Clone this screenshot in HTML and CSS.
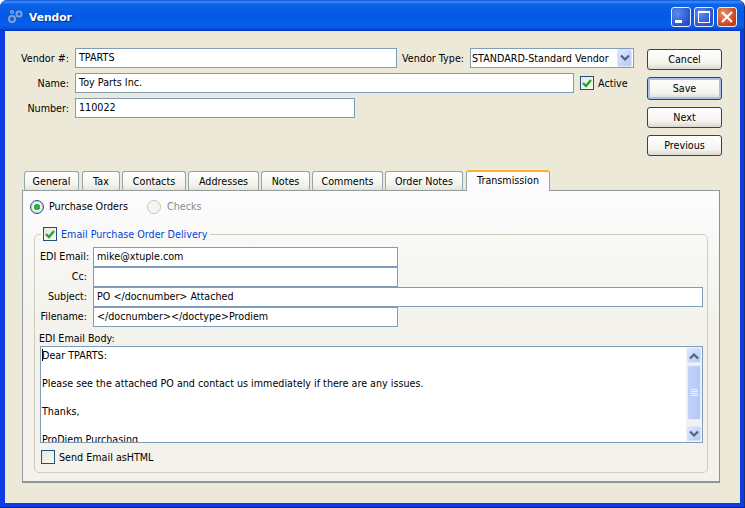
FILE: index.html
```html
<!DOCTYPE html>
<html lang="en">
<head>
<meta charset="utf-8">
<title>Vendor</title>
<link rel="stylesheet" href="styles.css">
</head>
<body>
<div class="window">
  <header class="titlebar">
    <svg class="app-icon" width="16" height="16" viewBox="0 0 16 16" fill="none" stroke="#7fa3d6" stroke-width="2"><circle cx="5" cy="10" r="3"/><circle cx="12" cy="5" r="2.6"/><circle cx="5" cy="3" r="1.4" stroke-width="1.4"/></svg>
    <span class="title">Vendor</span>
    <div class="caption-buttons">
      <span class="cap cap-blue"><svg width="20" height="20" viewBox="0 0 20 20"><rect x="4" y="13" width="7" height="3" fill="#fff"/></svg></span>
      <span class="cap cap-blue"><svg width="20" height="20" viewBox="0 0 20 20" fill="none" stroke="#fff"><rect x="4.5" y="4.5" width="11" height="11"/><path d="M4 5.5h12"/></svg></span>
      <span class="cap cap-red"><svg width="20" height="20" viewBox="0 0 20 20" stroke="#fff" stroke-width="2.2"><path d="M5 5l10 10M15 5L5 15"/></svg></span>
    </div>
  </header>
  <main class="client">
    <section class="top">
      <div class="top-form">
        <div class="row row-vendor">
          <label class="lbl lbl-top">Vendor #:</label>
          <div class="input w-vendor">TPARTS</div>
          <label class="lbl-type">Vendor Type:</label>
          <div class="select">
            <span>STANDARD-Standard Vendor</span>
            <span class="sel-btn"><svg width="12" height="8" viewBox="0 0 12 8" fill="none" stroke="#4d6185" stroke-width="2.2"><path d="M2 1.5l4 4 4-4"/></svg></span>
          </div>
        </div>
        <div class="row row-name">
          <label class="lbl lbl-top">Name:</label>
          <div class="input w-name">Toy Parts Inc.</div>
          <span class="check check-on check-active"><svg width="12" height="12" viewBox="0 0 12 12" fill="none" stroke="#22a52e" stroke-width="2.4"><path d="M2 6l3 3 5-6"/></svg></span>
          <span class="check-label">Active</span>
        </div>
        <div class="row row-number">
          <label class="lbl lbl-top">Number:</label>
          <div class="input w-number">110022</div>
        </div>
      </div>
      <div class="buttons">
        <button class="btn btn-cancel">Cancel</button>
        <button class="btn btn-save">Save</button>
        <button class="btn btn-next">Next</button>
        <button class="btn">Previous</button>
      </div>
    </section>

    <nav class="tabs">
      <span class="tab t-general">General</span>
      <span class="tab t-tax">Tax</span>
      <span class="tab t-contacts">Contacts</span>
      <span class="tab t-addresses">Addresses</span>
      <span class="tab t-notes">Notes</span>
      <span class="tab t-comments">Comments</span>
      <span class="tab t-order">Order Notes</span>
      <span class="tab tab-active">Transmission</span>
    </nav>

    <section class="panel">
      <div class="radios">
        <span class="radio radio-on"></span><span class="radio-label rl-po">Purchase Orders</span>
        <span class="radio radio-off"></span><span class="radio-label disabled">Checks</span>
      </div>
      <fieldset class="group">
        <legend class="legend">
          <span class="check check-on"><svg width="12" height="12" viewBox="0 0 12 12" fill="none" stroke="#22a52e" stroke-width="2.4"><path d="M2 6l3 3 5-6"/></svg></span>
          <span class="legend-text">Email Purchase Order Delivery</span>
        </legend>
        <div class="mail-form">
          <label class="lbl-mail">EDI Email:</label><div class="input mail w-mail">mike@xtuple.com</div>
          <label class="lbl-mail">Cc:</label><div class="input mail w-mail"></div>
          <label class="lbl-mail">Subject:</label><div class="input mail w-subject">PO &lt;/docnumber&gt; Attached</div>
          <label class="lbl-mail">Filename:</label><div class="input mail w-mail">&lt;/docnumber&gt;&lt;/doctype&gt;Prodiem</div>
        </div>
        <div class="body-label">EDI Email Body:</div>
        <div class="body-box">
          <div class="body-text">
            <p><span class="caret"></span>Dear TPARTS:</p>
            <p>&nbsp;</p>
            <p>Please see the attached PO and contact us immediately if there are any issues.</p>
            <p>&nbsp;</p>
            <p>Thanks,</p>
            <p>&nbsp;</p>
            <p>ProDiem Purchasing</p>
          </div>
          <div class="scrollbar">
            <span class="sb-btn"><svg width="12" height="8" viewBox="0 0 12 8" fill="none" stroke="#4d6185" stroke-width="2.2"><path d="M2 6.5l4-4 4 4"/></svg></span>
            <span class="sb-thumb"><svg width="7" height="8" viewBox="0 0 7 8" stroke="#eef3ff"><path d="M0 .5h7M0 2.5h7M0 4.5h7M0 6.5h7"/></svg></span>
            <span class="sb-btn sb-down"><svg width="12" height="8" viewBox="0 0 12 8" fill="none" stroke="#4d6185" stroke-width="2.2"><path d="M2 1.5l4 4 4-4"/></svg></span>
          </div>
        </div>
        <div class="send-row">
          <span class="check check-off"></span>
          <span class="check-label">Send Email asHTML</span>
        </div>
      </fieldset>
    </section>
  </main>
</div>
</body>
</html>
```

FILE: styles.css
```css
* { box-sizing: border-box; }
html, body { margin: 0; padding: 0; }
body {
  width: 745px;
  height: 508px;
  overflow: hidden;
  font-family: "DejaVu Sans", sans-serif;
  font-size: 9.6px;
  color: #000;
}
.window {
  width: 745px;
  height: 508px;
  display: flex;
  flex-direction: column;
  background: #0a3ee0;
  border-radius: 7px 7px 0 0;
  border-bottom: 1px solid #001ea0;
  border-right: 1px solid #1a2f7c;
}
.titlebar {
  height: 31px;
  flex: none;
  display: flex;
  align-items: center;
  padding: 3px 7px 0 7px;
  border-radius: 7px 7px 0 0;
  background: linear-gradient(180deg, #0a55d8 0%, #3c8cf5 6%, #0b64e6 14%, #0558e2 50%, #0560ea 80%, #0a55e0 90%, #0036c8 100%);
}
.app-icon { flex: none; }
.title {
  margin-left: 6px;
  color: #fff;
  font-weight: bold;
  font-size: 10.7px;
  text-shadow: 1px 1px 1px #06307c;
}
.caption-buttons { margin-left: auto; display: flex; gap: 3px; }
.cap {
  width: 20px;
  height: 20px;
  border: 1px solid #e8eefc;
  border-radius: 3px;
  display: flex;
  align-items: center;
  justify-content: center;
}
.cap svg { margin: -1px; flex: none; }
.cap-blue { background: radial-gradient(circle at 30% 30%, #5c8cf0, #2450cc 75%); }
.cap-red { background: radial-gradient(circle at 30% 30%, #e88d6c, #c83c14 75%); }

.client {
  flex: 1;
  margin: 0 4px 4px 5px;
  background: #ece9d8;
  padding: 17px 0 0 0;
  min-height: 0;
}
.top { display: flex; height: 122px; }
.top-form { width: 642px; flex: none; }
.row { display: flex; align-items: center; height: 20px; margin-bottom: 5px; }
.lbl { text-align: right; white-space: nowrap; }
.lbl-top { width: 64px; margin-right: 6px; }
.input {
  height: 20px;
  background: #fff;
  border: 1px solid #7f9db9;
  padding: 0 3px;
  line-height: 18px;
  white-space: nowrap;
  overflow: hidden;
}
.w-vendor { width: 322px; }
.w-name { width: 499px; }
.w-number { width: 280px; }
.lbl-type { margin-left: 5px; width: 63px; white-space: nowrap; margin-right: 5px; }
.select {
  width: 164px;
  height: 20px;
  background: #fff;
  border: 1px solid #7f9db9;
  padding: 0 1px 0 1px;
  display: flex;
  align-items: center;
  justify-content: space-between;
  white-space: nowrap;
}
.sel-btn, .sb-btn {
  width: 15px;
  height: 16px;
  display: flex;
  align-items: center;
  justify-content: center;
  background: linear-gradient(135deg, #dfe8fe, #b4c8f6);
  border: 1px solid #dbe4fa;
  border-radius: 2px;
  flex: none;
}
.sel-btn { height: 18px; }
.check {
  width: 14px;
  height: 14px;
  border: 1px solid #1c5180;
  display: inline-flex;
  align-items: center;
  justify-content: center;
  background: linear-gradient(135deg, #e8e6dc, #fbfbf8);
  flex: none;
}
.check-active { margin-left: 6px; }
.check-label { margin-left: 4px; white-space: nowrap; }
.buttons { display: flex; flex-direction: column; width: 75px; padding-top: 1px; }
.btn {
  font: inherit;
  color: #000;
  width: 75px;
  height: 21px;
  padding: 0;
  border: 1px solid #1a4a76;
  border-radius: 3px;
  background: linear-gradient(180deg, #fff, #f4f3ee 70%, #dcd8ce);
  margin-bottom: 7px;
}
.btn-save {
  height: 23px;
  box-shadow: inset 0 0 0 2px #a9c0ec;
}
.tabs {
  display: flex;
  height: 20px;
  margin-left: 19px;
  align-items: flex-end;
  position: relative;
  z-index: 1;
}
.tab {
  height: 19px;
  border: 1px solid #93a5a8;
  border-bottom: 0;
  border-radius: 3px 3px 0 0;
  background: linear-gradient(180deg, #fff, #f3f2eb 70%, #e6e4d8);
  text-align: center;
  line-height: 19px;
  white-space: nowrap;
}
.t-general { width: 55px; margin-right: 3px; }
.t-tax { width: 38px; margin-right: 2px; }
.t-contacts { width: 64px; margin-right: 2px; }
.t-addresses { width: 71px; margin-right: 2px; }
.t-notes { width: 49px; margin-right: 2px; }
.t-comments { width: 71px; margin-right: 2px; }
.t-order { width: 78px; margin-right: 3px; }
.tab-active {
  width: 84px;
  height: 21px;
  background: #fcfcfe;
  border-top: 2px solid #ffb02e;
  line-height: 17px;
  margin-bottom: -1px;
}
.panel {
  margin-left: 17px;
  width: 698px;
  height: 293px;
  border: 1px solid #919b9c;
  border-right-color: #8a9292;
  border-bottom: 2px solid #8f9699;
  background: linear-gradient(180deg, #fcfcfe 0, #f3f2ec 45%, #f3f2ec 100%);
  padding: 8px 11px 0 11px;
  position: relative;
}
.radios { display: flex; align-items: center; height: 15px; margin-left: -4px; }
.radio {
  width: 14px;
  height: 14px;
  border-radius: 50%;
  border: 1px solid #1c5180;
  background: #fff;
  flex: none;
}
.radio-on { background: radial-gradient(circle, #30b040 0 3px, #f4f3ee 3.5px 100%); box-shadow: inset 0 0 0 1px #c8d4e8; }
.radio-off { border-color: #c6c5ba; background: #f5f4ef; }
.radio-label { margin-left: 5px; white-space: nowrap; }
.rl-po { width: 98px; }
.radio-label.disabled { margin-left: 6px; color: #8b8b85; }
.group {
  margin: 13px 0 0 0;
  padding: 0 5px 0 5px;
  width: 674px;
  height: 246px;
  border: 1px solid #cfcdbd;
  border-radius: 5px;
  min-width: 0;
}
.legend {
  padding: 0 3px 0 2px;
  margin-left: 1px;
  display: flex;
  align-items: center;
  height: 14px;
  color: #0046d5;
}
.legend-text { margin-left: 4px; white-space: nowrap; }
.mail-form {
  display: grid;
  grid-template-columns: 47px max-content;
  column-gap: 6px;
  margin-top: 6px;
}
.lbl-mail { text-align: right; line-height: 20px; white-space: nowrap; }
.input.mail { padding: 0 3px; }
.w-mail { width: 305px; }
.w-subject { width: 610px; }
.body-label { margin-top: 7px; height: 12px; line-height: 10px; white-space: nowrap; margin-left: -1px; }
.body-box {
  width: 663px;
  height: 97px;
  border: 1px solid #7f9db9;
  background: #fff;
  display: flex;
  overflow: hidden;
}
.body-text { flex: 1; padding: 2px 0 0 1px; line-height: 14px; white-space: nowrap; overflow: hidden; }
.body-text p { margin: 0; }
.caret { display: inline-block; width: 0; height: 12px; border-left: 1px solid #000; vertical-align: -2px; margin-right: -1px; }
.scrollbar {
  width: 16px;
  flex: none;
  display: flex;
  flex-direction: column;
  background: #f3f2ee;
  padding: 1px 1px 0 1px;
  align-items: center;
}
.sb-btn { height: 15px; width: 14px; }
.sb-thumb {
  margin-top: 2px;
  height: 55px;
  width: 14px;
  background: linear-gradient(90deg, #c2d2fa, #b6c8f6);
  border: 1px solid #e4ebfc;
  border-radius: 2px;
  display: flex;
  align-items: center;
  justify-content: center;
}
.sb-down { margin-top: auto; margin-bottom: 1px; }
.send-row { display: flex; align-items: center; margin-top: 7px; margin-left: 1px; height: 14px; }
```
